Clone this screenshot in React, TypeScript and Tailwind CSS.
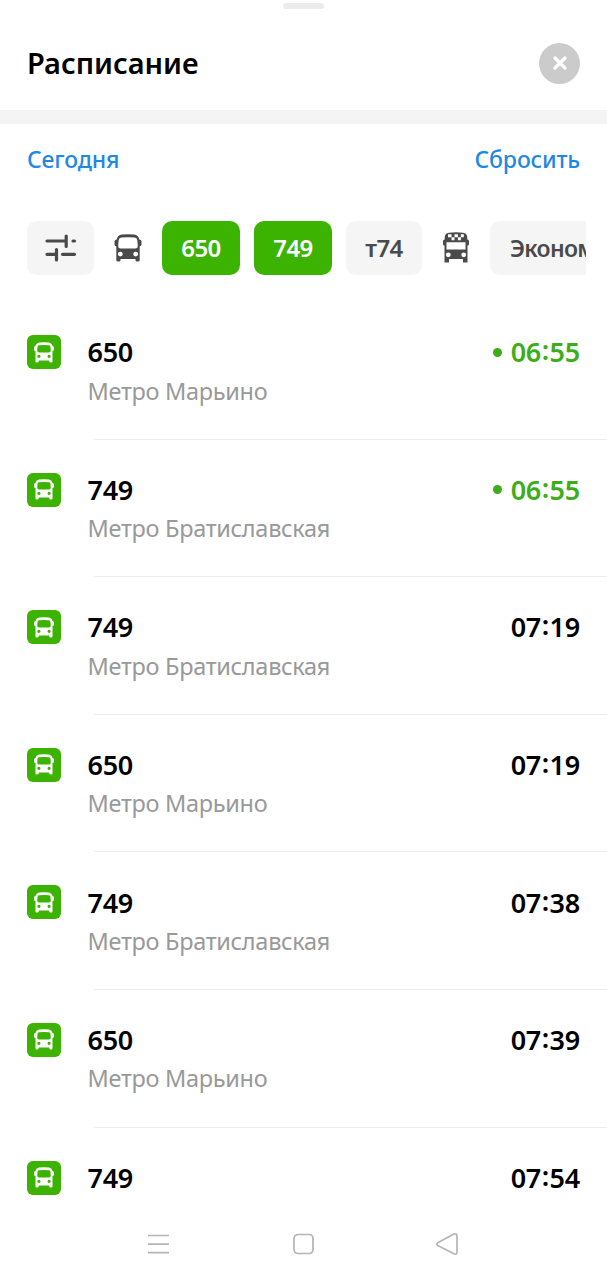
import React from 'react';

type Departure = { route: string; stop: string; time: string; live?: boolean };

const departures: Departure[] = [
  { route: '650', stop: 'Метро Марьино', time: '06:55', live: true },
  { route: '749', stop: 'Метро Братиславская', time: '06:55', live: true },
  { route: '749', stop: 'Метро Братиславская', time: '07:19' },
  { route: '650', stop: 'Метро Марьино', time: '07:19' },
  { route: '749', stop: 'Метро Братиславская', time: '07:38' },
  { route: '650', stop: 'Метро Марьино', time: '07:39' },
  { route: '749', stop: 'Метро Братиславская', time: '07:54' },
];

function BusIcon() {
  return (
    <svg viewBox="0 0 28 28" className="ml-[20px] size-[28px] shrink-0 text-[#4a4a4a]" fill="currentColor">
      <path
        fillRule="evenodd"
        d="M8 .6Q14-.2 20 .6Q24.500 1.200 25.300 5.500Q27.500 5.600 27.500 7.500V10.500Q27.500 12.200 25.700 12.200V26Q25.700 27.500 24.200 27.500H23Q21.500 27.500 21.500 26V25H6.500V26Q6.500 27.500 5 27.500H3.800Q2.300 27.500 2.300 26V12.200Q.5 12.200 .5 10.500V7.500Q.5 5.600 2.700 5.500Q3.500 1.200 8 .6ZM7.500 3.500Q5 3.700 4.600 6.500L4.200 11.500Q4.200 14.500 6.500 14.500H21.500Q23.800 14.500 23.800 11.500L23.400 6.500Q23 3.700 20.500 3.500Q14 2.900 7.500 3.500ZM6.300 17.700A2.400 2.400 0 1 0 6.300 22.500A2.400 2.400 0 1 0 6.300 17.700ZM21.700 17.700A2.400 2.400 0 1 0 21.700 22.500A2.400 2.400 0 1 0 21.700 17.700Z"
      />
    </svg>
  );
}

function BusBadge() {
  return (
    <div className="mt-[33px] flex size-[34px] shrink-0 items-center justify-center rounded-[6px] bg-[#3bb300]">
      <svg viewBox="0 0 20 21" className="h-[21px] w-[20px] text-white" fill="currentColor">
        <path
          fillRule="evenodd"
          d="M5 .6Q10-.2 15 .6Q18 1.200 18.600 4Q20 4.200 20 5.500V7.500Q20 9 18.500 9V19.500Q18.500 20.500 17.500 20.500H16.500Q15.300 20.500 15 18.500H5Q4.700 20.500 3.500 20.500H2.500Q1.500 20.500 1.500 19.500V9Q0 9 0 7.500V5.500Q0 4.200 1.400 4Q2 1.200 5 .6ZM5 3.200Q3.700 3.500 3.500 5L3.200 8.200Q3.200 10.400 5 10.400H15Q16.800 10.400 16.800 8.200L16.500 5Q16.300 3.500 15 3.200Q10 2.600 5 3.200ZM4.900 12.700A1.600 1.600 0 1 0 4.900 15.900A1.600 1.600 0 1 0 4.900 12.700ZM15.100 12.700A1.600 1.600 0 1 0 15.100 15.900A1.600 1.600 0 1 0 15.100 12.700Z"
        />
      </svg>
    </div>
  );
}

function MinibusIcon() {
  return (
    <svg viewBox="0 0 26 31" className="mb-[1px] ml-[21px] h-[31px] w-[26px] shrink-0 text-[#4a4a4a]" fill="currentColor">
      <path
        fillRule="evenodd"
        d="M6 .7Q13-.3 20 .7Q24 1.300 24.300 5V7.500Q26 7.700 26 9V12Q26 13.500 24.500 13.500V30.500H20V27H6V30.500H1.500V13.500Q0 13.500 0 12V9Q0 7.700 1.700 7.500V5Q2 1.300 6 .7ZM3.500 10.300V17.500H22.500V10.300ZM5.300 20.400A2.400 2.400 0 1 0 5.300 25.200A2.400 2.400 0 1 0 5.300 20.400ZM20.700 20.400A2.400 2.400 0 1 0 20.700 25.200A2.400 2.400 0 1 0 20.700 20.400Z"
      />
      <path fill="#fff" d="M5 2.200h3.500v3H5zM11.500 2.200h3.400v3h-3.400zM17.800 2.200h3v3h-3zM8.500 5.200h3v3h-3zM14.900 5.200h3v3h-3z" />
    </svg>
  );
}

function Time({ value }: { value: string }) {
  const [hours, minutes] = value.split(':');
  return (
    <span className="tracking-[-0.250px]">
      {hours}
      <span className="relative -top-[2px] mx-[0.700px]">:</span>
      {minutes}
    </span>
  );
}

const chip = 'flex h-[54px] shrink-0 items-center justify-center rounded-[10px] text-[24px] font-[570] tracking-[-0.6px]';

export default function App() {
  return (
    <div className="flex h-[1280px] w-[607px] flex-col overflow-hidden bg-white font-['Noto_Sans',sans-serif] font-medium">
      <div className="flex h-[18px] shrink-0 justify-center pt-[3px]">
        <div className="h-[6px] w-[41px] rounded-full bg-[#ebebeb]" />
      </div>
      <header className="flex h-[92px] shrink-0 items-center justify-between px-[27px] pb-[2px]">
        <h1 className="text-[29px] leading-[40px] font-[570] tracking-[-0.050px] text-black">Расписание</h1>
        <button aria-label="Закрыть" className="flex size-[41px] items-center justify-center rounded-full bg-[#cbcbcb]">
          <svg viewBox="0 0 14 14" className="size-[14px]" fill="none" stroke="#fff" strokeWidth="3.200" strokeLinecap="round">
            <path d="M2 2l10 10M12 2L2 12" />
          </svg>
        </button>
      </header>
      <div className="h-[14px] shrink-0 bg-[#f4f4f4]" />
      <div className="flex h-[72px] shrink-0 items-center justify-between px-[27px] pb-[2px] text-[23px] font-[550] tracking-[-0.150px] text-[#1e88e5]">
        <span>Сегодня</span>
        <span>Сбросить</span>
      </div>
      <div className="mt-[25px] mr-[21px] ml-[27px] flex h-[54px] shrink-0 items-center overflow-hidden text-[#4a4a4a]">
        <div className={`${chip} w-[67px] bg-[#f5f5f5]`}>
          <svg viewBox="0 0 32 28" className="h-[28px] w-[32px]" fill="none" stroke="#4a4a4a" strokeWidth="3.200" strokeLinecap="round">
            <path d="M2 7H20M21.200 2V12.500M28 7H29.500M2 20.300H11M11.500 15.500V26M17.500 20.300H29.500" />
          </svg>
        </div>
        <BusIcon />
        <div className={`${chip} ml-[20px] w-[78px] bg-[#3bb300] text-white`}>650</div>
        <div className={`${chip} ml-[14px] w-[78px] bg-[#3bb300] text-white`}>749</div>
        <div className={`${chip} ml-[14px] w-[76px] bg-[#f5f5f5]`}>т74</div>
        <MinibusIcon />
        <div className={`${chip} ml-[21px] w-[130px] justify-start bg-[#f5f5f5] pl-[20px]`}>
          <span className="text-[23px] tracking-[-0.7px]">Эконом</span>
        </div>
      </div>
      <main className="mt-[27px] h-[915px] shrink-0 overflow-hidden">
        {departures.map((item, i) => (
          <div key={i} className="flex h-[137.600px] pl-[27px]">
            <BusBadge />
            <div className="ml-[26.500px] flex grow flex-col">
              <div className="mt-[31.500px] flex h-[38px] items-center justify-between pr-[27px] text-[27px] font-[560] text-black">
                <span className="tracking-[-0.3px]">{item.route}</span>
                {item.live ? (
                  <span className="flex items-center gap-[9px] text-[#3dad18]">
                    <i className="mb-[1px] size-[9px] rounded-full bg-[#3dad18]" />
                    <Time value={item.time} />
                  </span>
                ) : (
                  <Time value={item.time} />
                )}
              </div>
              {i < departures.length - 1 && (
                <>
                  <div className="h-[38px] text-[23.500px] leading-[38px] font-normal tracking-[-0.3px] text-[#999]">{item.stop}</div>
                  <div className="mt-auto ml-[6.500px] h-px bg-[#ededed]" />
                </>
              )}
            </div>
          </div>
        ))}
      </main>
      <nav className="-mt-[9px] flex h-[72px] shrink-0 items-center bg-white pl-[147px] text-[#b4b4b4]">
        <svg viewBox="0 0 312 24" className="h-[24px] w-[312px]" fill="none" stroke="currentColor" strokeWidth="1.700" strokeLinejoin="round">
          <path d="M1 3.500H22M1 12.200H22M1 20.700H22" />
          <rect x="147" y="2.500" width="19" height="19" rx="4" />
          <path d="M290.700 10.800L307 2.100Q310 1.200 310 4.300V20Q310 23 307 21.700L290.700 13.500Q289 12.200 290.700 10.800Z" />
        </svg>
      </nav>
    </div>
  );
}
